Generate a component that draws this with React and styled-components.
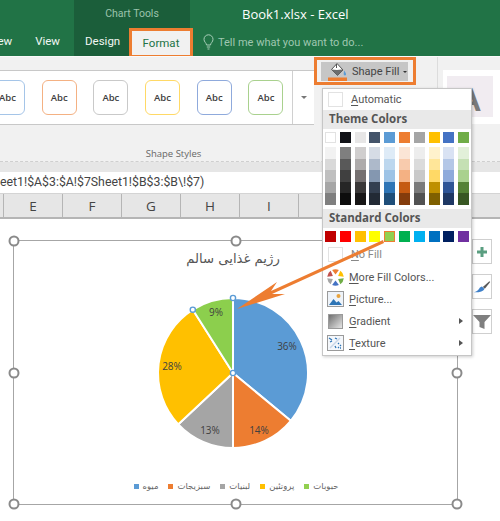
import styled, { createGlobalStyle } from "styled-components";

const GlobalStyle = createGlobalStyle`
  html, body { margin: 0; padding: 0; background: #fff; }
  * { box-sizing: border-box; }
`;

const Page = styled.div`
  position: relative;
  width: 500px;
  height: 521px;
  overflow: hidden;
  display: flex;
  flex-direction: column;
  font-family: Roboto, "Open Sans", sans-serif;
  color: #444;
`;

/* title bar */
const TitleBar = styled.div`
  display: flex;
  height: 56px;
  background: #217346;
  color: #fff;
  font-size: 11.5px;
`;

const LeftTabs = styled.div`
  width: 74px;
  height: 56px;
  padding: 0 14px 0 0;
  display: flex;
  justify-content: flex-end;
  align-items: flex-end;
  gap: 23px;
`;

const Tab = styled.div`
  height: 28px;
  line-height: 27px;
  color: #f2f7f4;
  white-space: nowrap;
`;

const ContextGroup = styled.div`
  width: 116px;
  background: #1b5e3a;
  display: flex;
  flex-direction: column;
`;

const ContextLabel = styled.div`
  height: 28px;
  line-height: 28px;
  text-align: center;
  font-size: 10.5px;
  color: #9cc3ac;
`;

const ContextTabs = styled.div`
  display: flex;
  align-items: flex-end;
  justify-content: space-between;
  padding-left: 11px;
  width: 119px;
  height: 28px;
`;

const ActiveTab = styled.div`
  position: relative;
  z-index: 2;
  flex: none;
  width: 64px;
  height: 28px;
  background: #f1f1f1;
  border: 3px solid #ed7d31;
  border-bottom-width: 1px;
  color: #217346;
  text-align: center;
  line-height: 24px;
  font-size: 11.5px;
`;

const TitleRight = styled.div`
  flex: 1;
  display: flex;
  flex-direction: column;
`;

const DocTitle = styled.div`
  height: 28px;
  line-height: 28px;
  padding-left: 52px;
  font-family: "Open Sans", sans-serif;
  font-size: 13px;
`;

const TellMe = styled.div`
  height: 28px;
  padding-left: 13px;
  display: flex;
  align-items: center;
  gap: 4px;
  color: #9fc7b0;
  font-size: 11px;
`;

/* ribbon */
const Ribbon = styled.div`
  display: flex;
  height: 106px;
  background: #f1f1f1;
  border-top: 1px solid #fafafa;
  border-bottom: 1px dashed #cfcfcf;
`;

const StylesGroup = styled.div`
  width: 314px;
  display: flex;
  flex-direction: column;
  padding-top: 13px;
`;

const Gallery = styled.div`
  height: 55px;
  display: flex;
  background: #fff;
  border-top: 1px solid #c8c8c8;
  border-bottom: 1px solid #c8c8c8;
`;

const GalleryRow = styled.div`
  width: 293px;
  flex: none;
  display: flex;
  align-items: center;
  gap: 16.7px;
  overflow: hidden;
  border-right: 1px solid #d0d0d0;
`;

const AbcCard = styled.div`
  flex: none;
  width: 35px;
  height: 35px;
  margin-left: ${(p) => p.$offset || 0}px;
  border: 1.5px solid ${(p) => p.$color};
  border-radius: 6px;
  display: flex;
  align-items: center;
  justify-content: center;
  font-family: "Open Sans", sans-serif;
  font-size: 9.5px;
  font-weight: 600;
  color: #404040;
`;

const MoreButton = styled.div`
  flex: 1;
  display: flex;
  align-items: center;
  justify-content: center;
`;

const Caret = styled.span`
  display: inline-block;
  flex: none;
  width: 0;
  height: 0;
  border-left: ${(p) => p.$size || 3}px solid transparent;
  border-right: ${(p) => p.$size || 3}px solid transparent;
  border-top: ${(p) => p.$size || 3}px solid ${(p) => p.$color || "#555"};
`;

const GroupLabel = styled.div`
  margin-top: 22px;
  padding-left: 33px;
  text-align: center;
  font-family: "Open Sans", sans-serif;
  font-size: 9.5px;
  color: #666;
`;

const FillColumn = styled.div`
  width: 124px;
  flex: none;
  border-right: 1px solid #dcdcdc;
`;

const FillOutline = styled.div`
  width: 102px;
  height: 28px;
  border: 3px solid #ed7d31;
  padding: 2px 5px 1px 4px;
  display: flex;
`;

const FillButton = styled.div`
  flex: 1;
  background: #c6c6c6;
  display: flex;
  align-items: center;
  padding-left: 7px;
  gap: 4px;
  font-size: 11px;
  white-space: nowrap;
  color: #444;
`;

const PreviewBox = styled.div`
  flex: 1;
  margin: 13px 0 37px 5px;
  background: #fff;
  padding: 6px 7px 7px 4px;
  display: flex;
`;

const PreviewInner = styled.div`
  flex: 1;
  background: #f1ecf1;
  display: flex;
  align-items: center;
  font-family: "Liberation Sans", sans-serif;
  font-weight: 700;
  font-size: 34px;
  color: #7a7a7a;
  padding: 5px 0 0 10px;
`;

const RibbonFoot = styled.div`
  height: 10px;
  background: #e6e6e6;
`;

/* formula bar and grid */
const FormulaBar = styled.div`
  height: 21px;
  background: #fff;
  white-space: nowrap;
  direction: ltr;
  line-height: 20px;
  font-size: 12.3px;
  color: #444;
`;

const ColumnHeaders = styled.div`
  height: 26px;
  flex: none;
  display: flex;
  background: #e6e6e6;
  border-top: 1px solid #d4d4d4;
  border-bottom: 2px solid #b5b5b5;
  padding-left: 3px;
`;

const ColumnHead = styled.div`
  flex: none;
  width: 59px;
  border-left: 1px solid #b5b5b5;
  text-align: center;
  line-height: 24px;
  font-family: "Open Sans", sans-serif;
  font-size: 13.5px;
  color: #444;
`;

const Sheet = styled.div`
  position: relative;
  flex: 1;
  background: #fff;
  padding: 21px 0 0 13px;
`;

const ChartFrame = styled.div`
  position: relative;
  width: 445px;
  height: 265px;
  border: 1.5px solid #a6a6a6;
  display: flex;
  flex-direction: column;
  align-items: center;
  padding-right: 5px;
`;

const Handle = styled.span`
  position: absolute;
  left: ${(p) => p.$x};
  top: ${(p) => p.$y};
  width: 11px;
  height: 11px;
  border-radius: 50%;
  background: #fff;
  border: 2px solid #8a8a8a;
  transform: translate(-50%, -50%);
`;

const ChartTitle = styled.div`
  margin-top: 7px;
  height: 22px;
  line-height: 22px;
  font-family: "DejaVu Sans", sans-serif;
  font-size: 13.2px;
  color: #555;
  direction: rtl;
`;

const PieSvg = styled.svg`
  display: block;
  margin-top: 16px;
  flex: none;
`;

const Legend = styled.div`
  margin: 29px 0 0 6px;
  display: flex;
  gap: 10px;
  align-items: center;
  font-family: "DejaVu Sans", sans-serif;
  font-size: 8.5px;
  color: #666;
`;

const LegendItem = styled.div`
  display: flex;
  align-items: center;
  gap: 4px;
`;

const LegendDot = styled.span`
  width: 5px;
  height: 5px;
  background: ${(p) => p.$color};
`;

const SideButtons = styled.div`
  position: absolute;
  left: 472px;
  top: 20px;
  display: flex;
  flex-direction: column;
  gap: 10px;
`;

const SideButton = styled.div`
  width: 20px;
  height: 25px;
  background: #fff;
  border: 1px solid #cfcfcf;
  display: flex;
  align-items: center;
  justify-content: center;
`;

/* shape fill menu */
const Menu = styled.div`
  position: absolute;
  left: 322px;
  top: 88px;
  z-index: 5;
  width: 150px;
  height: 268px;
  background: #fff;
  border: 1px solid #c6c6c6;
  box-shadow: 1px 1px 3px rgba(0, 0, 0, 0.2);
  font-size: 11px;
  color: #555;
`;

const MenuRow = styled.div`
  height: ${(p) => p.$height || 22}px;
  display: flex;
  align-items: center;
  padding-left: 3px;
  position: relative;
`;

const MenuIcon = styled.span`
  flex: none;
  width: 18px;
  height: 18px;
  display: flex;
  align-items: center;
  justify-content: center;
`;

const EmptyCheck = styled.span`
  width: 15px;
  height: 15px;
  border: 1px solid #e2e2e2;
  background: #fff;
`;

const MenuLabel = styled.span`
  margin-left: ${(p) => (p.$tight ? 5 : 7)}px;
  color: ${(p) => (p.$muted ? "#888" : "#555")};

  u {
    text-underline-offset: 2px;
  }
`;

const SubArrow = styled.span`
  position: absolute;
  right: 8px;
  top: 8px;
  width: 0;
  height: 0;
  border-top: 3px solid transparent;
  border-bottom: 3px solid transparent;
  border-left: 4px solid #555;
`;

const MenuHeader = styled.div`
  height: 19px;
  line-height: 18px;
  padding-left: 6px;
  background: #e9e9e9;
  font-family: "Open Sans", sans-serif;
  font-weight: 700;
  font-size: 11.5px;
  color: #555;
`;

const SwatchGrid = styled.div`
  display: grid;
  grid-template-columns: repeat(10, 11px);
  column-gap: 3.8px;
  padding: ${(p) => p.$pad || "3px 0 0 2px"};
`;

const Swatch = styled.span`
  height: 11px;
  background: ${(p) => p.$color};
  border: 1px solid ${(p) => (p.$selected ? "#ed7d31" : p.$outline ? "#e2e2e2" : "transparent")};
`;

const ShadeColumn = styled.div`
  display: flex;
  flex-direction: column;
  height: 58px;
`;

const Shade = styled.span`
  flex: 1;
  background: ${(p) => p.$color};
`;

const GradientSquare = styled.span`
  width: 15px;
  height: 15px;
  border: 1px solid #9a9a9a;
  background: linear-gradient(135deg, #707070, #e6e6e6);
`;

const ArrowOverlay = styled.svg`
  position: absolute;
  left: 230px;
  top: 235px;
  z-index: 6;
`;

const galleryColors = ["#a5c5e8", "#f4b183", "#c9c9c9", "#ffd966", "#8faadc", "#a9d18e"];
const columns = ["E", "F", "G", "H", "I", "", "", ""];
const themeColors = ["#ffffff", "#111217", "#e7e6e6", "#44546a", "#5b9bd5", "#ed7d31", "#a5a5a5", "#ffc000", "#4472c4", "#70ad47"];
const shades = [
  ["#f2f2f2", "#d9d9d9", "#bfbfbf", "#a6a6a6", "#7f7f7f"],
  ["#7f7f7f", "#595959", "#404040", "#262626", "#0d0d0d"],
  ["#d0cece", "#aeabab", "#757070", "#3a3838", "#171616"],
  ["#d6dce5", "#adb9ca", "#8497b0", "#333f50", "#222a35"],
  ["#deebf7", "#bdd7ee", "#9dc3e6", "#2e75b6", "#1f4e79"],
  ["#fbe5d6", "#f8cbad", "#f4b183", "#c55a11", "#843c0c"],
  ["#ededed", "#dbdbdb", "#c9c9c9", "#7b7b7b", "#525252"],
  ["#fff2cc", "#ffe699", "#ffd966", "#bf9000", "#7f6000"],
  ["#d9e2f3", "#b4c7e7", "#8eaadb", "#2f5597", "#1f3864"],
  ["#e2f0d9", "#c5e0b4", "#a9d18e", "#548235", "#385723"],
];
const standardColors = ["#c00000", "#ff0000", "#ffc000", "#ffff00", "#92d050", "#00b050", "#00b0f0", "#0070c0", "#002060", "#7030a0"];

const slices = [
  { value: 36, color: "#5b9bd5", label: "36%", x: 134, y: 64 },
  { value: 14, color: "#ed7d31", label: "14%", x: 106, y: 148 },
  { value: 13, color: "#a5a5a5", label: "13%", x: 57, y: 148 },
  { value: 28, color: "#ffc000", label: "28%", x: 19, y: 84 },
  { value: 9, color: "#8ccf4d", label: "9%", x: 63, y: 30 },
];
const legend = [
  ["#5b9bd5", "میوه"],
  ["#ed7d31", "سبزیجات"],
  ["#a5a5a5", "لبنیات"],
  ["#ffc000", "پروتئین"],
  ["#92d050", "حبوبات"],
];

const PIE_CX = 80;
const PIE_CY = 87;
const PIE_R = 75;

function point(pct, r = PIE_R) {
  const a = (pct / 100) * Math.PI * 2 - Math.PI / 2;
  return [PIE_CX + r * Math.cos(a), PIE_CY + r * Math.sin(a)];
}

function Pie() {
  let start = 0;
  const paths = slices.map((s) => {
    const [x1, y1] = point(start);
    const [x2, y2] = point(start + s.value);
    const d = `M${PIE_CX} ${PIE_CY}L${x1} ${y1}A${PIE_R} ${PIE_R} 0 0 1 ${x2} ${y2}Z`;
    start += s.value;
    return <path key={s.label} d={d} fill={s.color} stroke="#fff" strokeWidth="2" />;
  });
  const [hx, hy] = point(91);
  return (
    <PieSvg width="160" height="166" viewBox="0 0 160 166">
      {paths}
      {slices.map((s) => (
        <text key={s.label} x={s.x} y={s.y} textAnchor="middle" fontSize="10" fontFamily="Open Sans, sans-serif" fill="#404040">
          {s.label}
        </text>
      ))}
      {[[PIE_CX, PIE_CY - PIE_R], [hx, hy], [PIE_CX, PIE_CY]].map(([x, y], i) => (
        <circle key={i} cx={x} cy={y} r="2.6" fill="#fff" stroke="#5b9bd5" strokeWidth="1.4" />
      ))}
    </PieSvg>
  );
}

function BucketIcon() {
  return (
    <svg width="20" height="19" viewBox="0 0 20 19">
      <path d="M9 1.5l6 6.5-5.5 5.5L3.5 7.5z" fill="#fff" stroke="#555" strokeWidth="1" />
      <path d="M3.5 7.5l6 6 5.5-5.5-1.500-.5c-3 .6-6 .6-10 0z" fill="#6d6d6d" />
      <path d="M8.500 2V6" stroke="#555" strokeWidth="1" />
      <path d="M16 8.500c1.500 2 2.300 3 2 4.200-.3 1-1.800 1-2.200 0-.3-1 .2-2.400.2-4.200z" fill="#5b9bd5" />
      <rect x="0" y="15.500" width="19" height="3.500" fill="#ed7d31" />
    </svg>
  );
}

function BulbIcon() {
  return (
    <svg width="11" height="16" viewBox="0 0 11 16" fill="none" stroke="#a9cfb9" strokeWidth="1">
      <path d="M3.500 11c0-2-2.500-3-2.500-5.700a4.500 4.500 0 0 1 9 0C10 8 7.500 9 7.500 11z" />
      <path d="M3.800 13h3.400M4.500 15h2" />
    </svg>
  );
}

function WheelIcon() {
  const cols = ["#ed7d31", "#ffc000", "#70ad47", "#4472c4", "#a5a5a5", "#c0504d"];
  return (
    <svg width="17" height="17" viewBox="-8.500 -8.500 17 17">
      {cols.map((c, i) => (
        <path key={c} d="M0-3L-3.400-7.600A8.300 8.300 0 0 1 3.400-7.600Z" fill={c} transform={`rotate(${i * 60})`} />
      ))}
    </svg>
  );
}

function PictureIcon() {
  return (
    <svg width="17" height="16" viewBox="0 0 17 16">
      <rect x="0.500" y="0.500" width="16" height="15" fill="#eef3f9" stroke="#9a9a9a" />
      <circle cx="11.500" cy="5" r="2" fill="#e9a33c" />
      <path d="M2 14l4.500-6 3 3.500 2-1.500 3.500 4z" fill="#2e75b6" />
    </svg>
  );
}

function TextureIcon() {
  return (
    <svg width="17" height="16" viewBox="0 0 17 16">
      <rect x="0.500" y="0.500" width="16" height="15" fill="#f4f7fb" stroke="#9a9a9a" />
      <path d="M3 13L13 3" stroke="#c8d6e8" strokeWidth="1.500" />
      <path d="M2 3l3 2M3 7l2-1M8 3l2 1M11 12l1 1M13 10l1 1M8 11l1 2M13 13l1 0M11 8l1 1" stroke="#2e75b6" strokeWidth="1.300" />
    </svg>
  );
}

function PlusIcon() {
  return (
    <svg width="12" height="12" viewBox="0 0 12 12">
      <path d="M6 1v10M1 6h10" stroke="#5a9e80" strokeWidth="3" />
    </svg>
  );
}

function BrushIcon() {
  return (
    <svg width="22" height="16" viewBox="0 0 22 16">
      <path d="M12 8L20 1l1 1-6.500 8z" fill="#595959" />
      <path d="M11 7.500l3 2.800c-1.500 3-6 4.500-13 4.200 3-.8 5-2 6.500-4.500 1-1.500 2-2.200 3.500-2.500z" fill="#3f80c9" />
    </svg>
  );
}

function FilterIcon() {
  return (
    <svg width="18" height="16" viewBox="0 0 18 16">
      <path d="M0 1h18l-6.500 7v7l-5-2V8z" fill="#7f7f7f" />
    </svg>
  );
}

function App() {
  return (
    <Page>
      <GlobalStyle />
      <TitleBar>
        <LeftTabs>
          <Tab>ew</Tab>
          <Tab>View</Tab>
        </LeftTabs>
        <ContextGroup>
          <ContextLabel>Chart Tools</ContextLabel>
          <ContextTabs>
            <Tab>Design</Tab>
            <ActiveTab>Format</ActiveTab>
          </ContextTabs>
        </ContextGroup>
        <TitleRight>
          <DocTitle>Book1.xlsx - Excel</DocTitle>
          <TellMe>
            <BulbIcon />
            Tell me what you want to do...
          </TellMe>
        </TitleRight>
      </TitleBar>

      <Ribbon>
        <StylesGroup>
          <Gallery>
            <GalleryRow>
              {galleryColors.map((c, i) => (
                <AbcCard key={c} $color={c} $offset={i === 0 ? -10 : 0}>
                  Abc
                </AbcCard>
              ))}
            </GalleryRow>
            <MoreButton>
              <Caret $color="#777" />
            </MoreButton>
          </Gallery>
          <GroupLabel>Shape Styles</GroupLabel>
        </StylesGroup>
        <FillColumn>
          <FillOutline>
            <FillButton>
              <BucketIcon />
              Shape Fill
              <Caret $size={2.5} $color="#333" />
            </FillButton>
          </FillOutline>
        </FillColumn>
        <PreviewBox>
          <PreviewInner>A</PreviewInner>
        </PreviewBox>
      </Ribbon>
      <RibbonFoot />

      <FormulaBar>eet1!$A$3:$A!$7Sheet1!$B$3:$B\!$7)</FormulaBar>
      <ColumnHeaders>
        {columns.map((c, i) => (
          <ColumnHead key={i}>{c}</ColumnHead>
        ))}
      </ColumnHeaders>

      <Sheet>
        <ChartFrame>
          <Handle $x="0" $y="0" />
          <Handle $x="50%" $y="0" />
          <Handle $x="100%" $y="0" />
          <Handle $x="0" $y="50%" />
          <Handle $x="100%" $y="50%" />
          <Handle $x="0" $y="100%" />
          <Handle $x="50%" $y="100%" />
          <Handle $x="100%" $y="100%" />
          <ChartTitle>رژیم غذایی سالم</ChartTitle>
          <Pie />
          <Legend>
            {legend.map(([color, name]) => (
              <LegendItem key={name}>
                <LegendDot $color={color} />
                {name}
              </LegendItem>
            ))}
          </Legend>
        </ChartFrame>
        <SideButtons>
          <SideButton>
            <PlusIcon />
          </SideButton>
          <SideButton>
            <BrushIcon />
          </SideButton>
          <SideButton>
            <FilterIcon />
          </SideButton>
        </SideButtons>
      </Sheet>

      <Menu>
        <MenuRow $height={21}>
          <MenuIcon>
            <EmptyCheck />
          </MenuIcon>
          <MenuLabel>
            <u>A</u>utomatic
          </MenuLabel>
        </MenuRow>
        <MenuHeader>Theme Colors</MenuHeader>
        <SwatchGrid>
          {themeColors.map((c, i) => (
            <Swatch key={c} $color={c} $outline={i === 0} />
          ))}
        </SwatchGrid>
        <SwatchGrid $pad="4px 0 4px 2px">
          {shades.map((col) => (
            <ShadeColumn key={col[0] + col[4]}>
              {col.map((c) => (
                <Shade key={c} $color={c} />
              ))}
            </ShadeColumn>
          ))}
        </SwatchGrid>
        <MenuHeader>Standard Colors</MenuHeader>
        <SwatchGrid>
          {standardColors.map((c) => (
            <Swatch key={c} $color={c} $selected={c === "#92d050"} />
          ))}
        </SwatchGrid>
        <MenuRow $height={24}>
          <MenuIcon>
            <EmptyCheck />
          </MenuIcon>
          <MenuLabel $muted>
            <u>N</u>o Fill
          </MenuLabel>
        </MenuRow>
        <MenuRow>
          <MenuIcon>
            <WheelIcon />
          </MenuIcon>
          <MenuLabel $tight>
            <u>M</u>ore Fill Colors...
          </MenuLabel>
        </MenuRow>
        <MenuRow>
          <MenuIcon>
            <PictureIcon />
          </MenuIcon>
          <MenuLabel $tight>
            <u>P</u>icture...
          </MenuLabel>
        </MenuRow>
        <MenuRow>
          <MenuIcon>
            <GradientSquare />
          </MenuIcon>
          <MenuLabel $tight>
            <u>G</u>radient
          </MenuLabel>
          <SubArrow />
        </MenuRow>
        <MenuRow>
          <MenuIcon>
            <TextureIcon />
          </MenuIcon>
          <MenuLabel $tight>
            <u>T</u>exture
          </MenuLabel>
          <SubArrow />
        </MenuRow>
      </Menu>

      <ArrowOverlay width="160" height="80" viewBox="230 235 160 80">
        <path d="M237 309L277 282 271 291 383 240 384 243 272 294 285 294Z" fill="#ed7d31" />
      </ArrowOverlay>
    </Page>
  );
}

export default App;
